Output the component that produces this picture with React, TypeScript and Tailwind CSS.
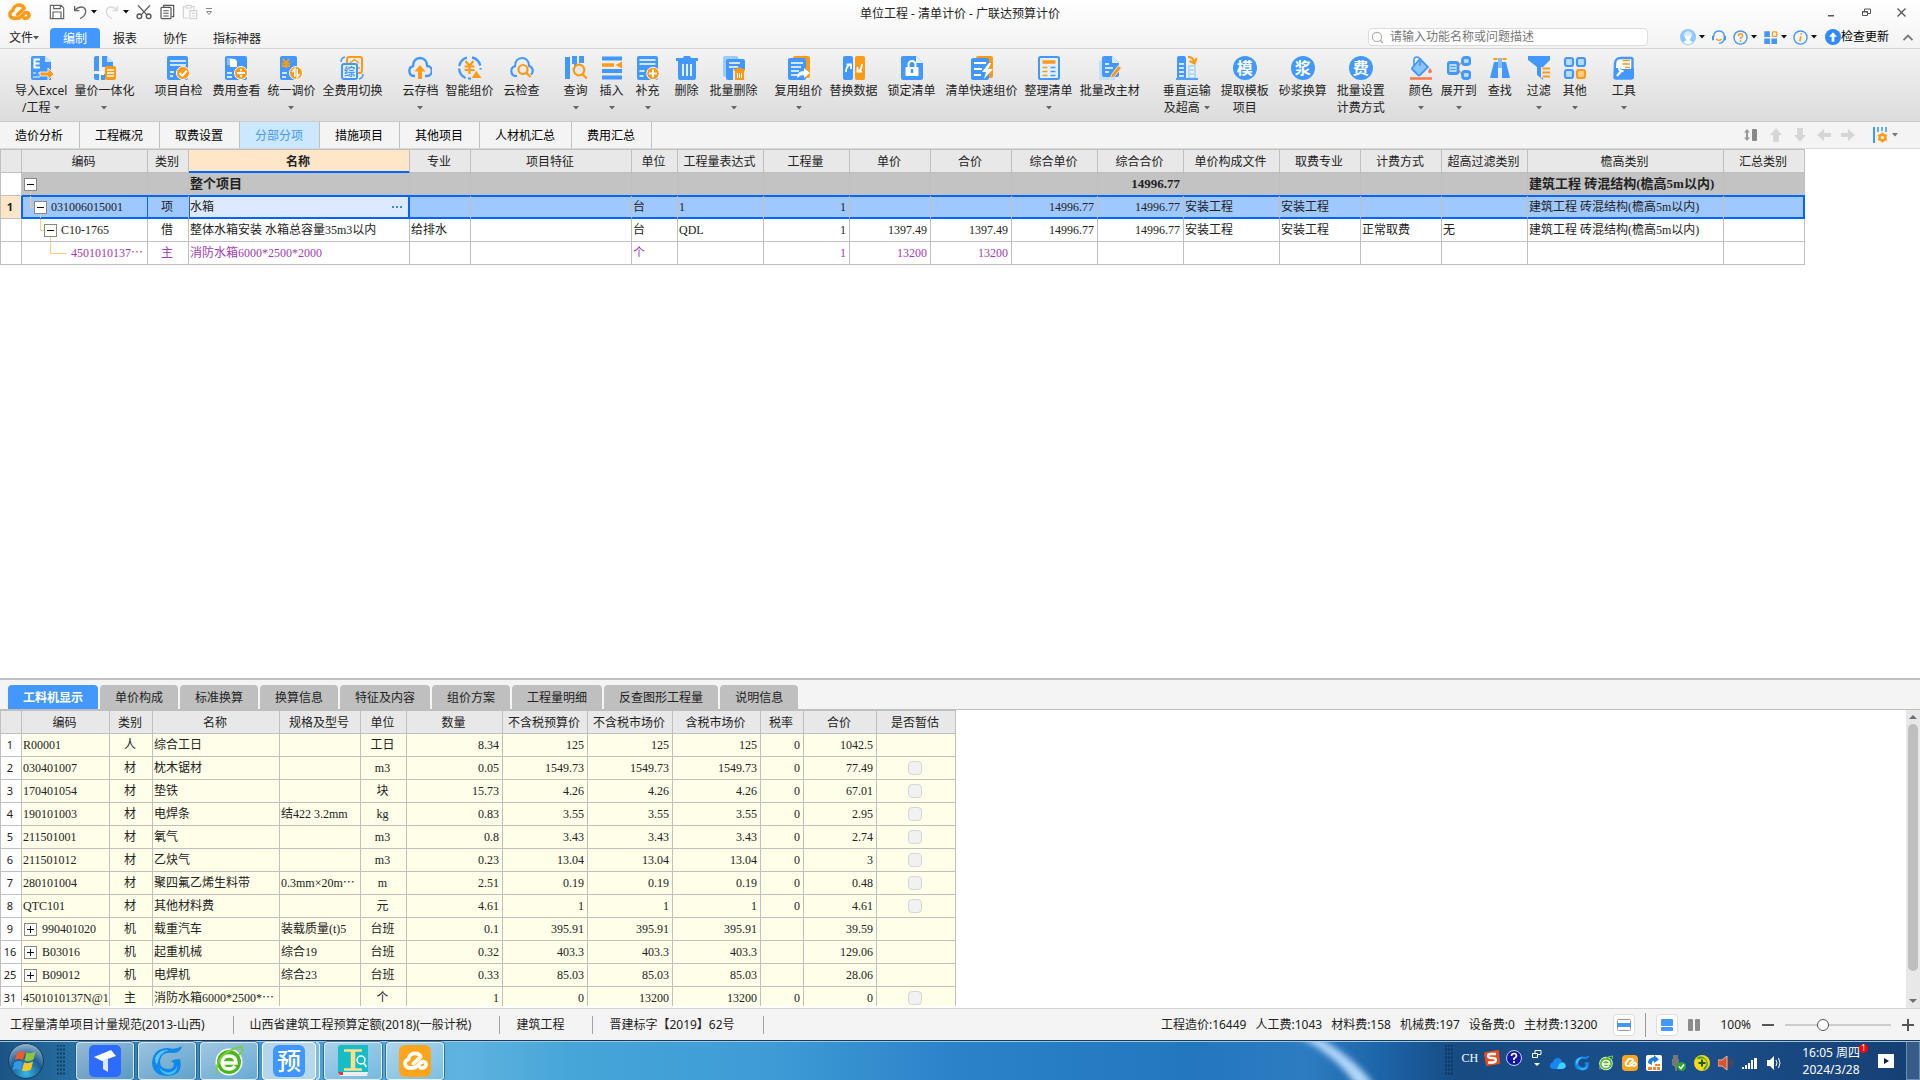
import { useState } from "react";
import type { ReactNode } from "react";

const B = "#4398ff";
const O = "#ff9a17";

function Svg({ size = 24, children }: { size?: number; children: ReactNode }) {
  return (
    <svg width={size} height={size} viewBox="0 0 24 24" fill="none" aria-hidden="true" className="shrink-0">
      {children}
    </svg>
  );
}

function Arrow({ color = "#444" }: { color?: string }) {
  return (
    <svg width="6" height="4" viewBox="0 0 6 4" aria-hidden="true" className="shrink-0">
      <path d="M0 0h6L3 3.6z" fill={color} />
    </svg>
  );
}

function CloudLogo({ color = O, size = 24 }: { color?: string; size?: number }) {
  return (
    <svg width={size} height={size} viewBox="0 0 24 24" fill="none" stroke={color} strokeWidth="3.4" strokeLinecap="round" strokeLinejoin="round" aria-hidden="true" className="shrink-0">
      <path d="M10 18.3H6.5a3.9 3.9 0 0 1-.6-7.7C6.200 7 9 5 12 5c2.300 0 4.300 1.200 5.300 3.200L10.500 14.500" />
      <path d="M10.500 18.300c2 0 2.800-.8 4-2l3-3c1.200-1.200 3.200-1 4 .2 1.400 2 0 4.800-2.500 4.800h-2" />
    </svg>
  );
}

function CharCircle({ char }: { char: string }) {
  return (
    <span className="flex size-6 items-center justify-center rounded-full bg-[#4398ff] text-base leading-6 font-bold text-white" aria-hidden="true">
      {char}
    </span>
  );
}

const icons: Record<string, ReactNode> = {
  import: (
    <Svg>
      <path d="M2 2q0-2 2-2h12l6 6v18H4q-2 0-2-2z" fill={B} />
      <path d="M16 0l6 6h-6z" fill="#cce4ff" />
      <path d="M11 3.500H5.500v8H11M5.500 7.500h5" stroke="#fff" strokeWidth="2" />
      <path d="M4 17h3M9 17h2M4 21h7" stroke="#b9dbff" strokeWidth="1.500" />
      <path d="M11 16h8v-4l6 6-6 6v-4h-8z" fill={O} stroke="#e8e8e8" strokeWidth="1" />
    </Svg>
  ),
  merge: (
    <Svg>
      <path d="M2 2q0-2 2-2h3v15H2zM10 0h5l6 6v5H10zM2 18h5v6H4q-2 0-2-2zM9 18h4v6H9z" fill={B} />
      <path d="M15 0l6 6h-6z" fill="#cce4ff" />
      <path d="M7 15h5v4H7z" fill="#fff" />
      <rect x="13" y="10" width="11" height="14" rx="2" fill={O} />
      <path d="M15 14h7M15 17h7M15 20h7" stroke="#fff" strokeWidth="1.300" />
    </Svg>
  ),
  check: (
    <Svg>
      <rect x="1" y="0" width="21" height="24" rx="2" fill={B} />
      <path d="M4 5h16M4 9h16M4 16h4M4 20h3" stroke="#fff" strokeWidth="1.700" />
      <circle cx="17" cy="17" r="6.500" fill={O} stroke="#fff" />
      <path d="M13.500 17l2.800 2.700 4.500-5" stroke="#fff" strokeWidth="2" />
    </Svg>
  ),
  view: (
    <Svg>
      <rect x="1" y="0" width="22" height="24" rx="2" fill={B} />
      <path d="M3 2h6v7H3z" fill="#8dc2ff" />
      <path d="M6 3h5l2 2v6H6z" fill="#fff" />
      <path d="M3 17h5M3 21h5" stroke="#fff" strokeWidth="1.500" />
      <circle cx="17" cy="17" r="6.500" fill={O} stroke="#fff" />
      <path d="M13 17h8M17 12.800v2.400M17 18.800v2.400" stroke="#fff" strokeWidth="1.800" />
    </Svg>
  ),
  adjust: (
    <Svg>
      <rect x="1" y="0" width="17" height="24" rx="2" fill={B} />
      <path d="M4 3l3 4 3-4M3 7.500h8M3 10h8M7 7v5" stroke={O} strokeWidth="1.800" />
      <path d="M3 17h5M3 21h4" stroke="#fff" strokeWidth="1.500" />
      <circle cx="17" cy="17" r="6.500" fill={O} stroke="#fff" />
      <path d="M15.800 21v-8l-2.500 3M18.200 13v8l2.500-3" stroke="#fff" strokeWidth="1.600" />
    </Svg>
  ),
  swap: (
    <Svg>
      <rect x="7" y="1" width="15" height="16" rx="2" stroke={O} strokeWidth="2" />
      <path d="M10 7l4.500-3.500L19 7M12 8.500h6M18 12h2" stroke={O} strokeWidth="1.500" />
      <rect x="2" y="8" width="15" height="15" rx="2" fill="#e3f0ff" stroke={B} strokeWidth="2" />
      <text x="9.500" y="19.800" textAnchor="middle" fontSize="11" fontWeight="700" fill={B}>综</text>
      <path d="M1 6q0-4 4-5M23 18q0 4-4 5" stroke={B} strokeWidth="1.500" />
    </Svg>
  ),
  cloudUp: (
    <Svg>
      <path d="M7 20H6a5 5 0 0 1-1-9.800C5 5 8 2 12 2s7 3 7.200 8A5 5 0 0 1 18.500 20H17" stroke={B} strokeWidth="2.400" />
      <path d="M12 9l5.500 6.500H14V23h-4v-7.500H6.500z" fill={O} />
    </Svg>
  ),
  smart: (
    <Svg>
      <path d="M9 1.600A10.800 10.800 0 0 0 9 22.400M14 1.500a10.800 10.800 0 0 1 8.500 12" stroke={B} strokeWidth="2.300" strokeDasharray="12 2.500" />
      <path d="M7.500 5l4 5 4-5M6.500 10.500h10M6.500 14h10M11.500 10v8" stroke={O} strokeWidth="2.200" />
      <path d="M18.500 15l5 7h-10z" fill={O} />
      <path d="M10 22.500h3" stroke={B} strokeWidth="2" />
    </Svg>
  ),
  cloudSearch: (
    <Svg>
      <path d="M7 20H6a5 5 0 0 1-1-9.800C5 5 8 2 12 2s7 3 7.200 8A5 5 0 0 1 21 18.500" stroke={B} strokeWidth="2.200" />
      <circle cx="13" cy="13.500" r="4.500" stroke={O} strokeWidth="2.200" />
      <path d="M16.500 17l4 4" stroke={O} strokeWidth="2.400" />
    </Svg>
  ),
  query: (
    <Svg>
      <path d="M1 1h5v22H1zM8 0h5v8l-3 3v-3H8zM15 0h5v7h-5z" fill={B} />
      <circle cx="15" cy="14" r="5.300" fill="#e8e8e8" stroke={O} strokeWidth="2.200" />
      <path d="M18.800 18.500l4 4" stroke={O} strokeWidth="2.400" />
    </Svg>
  ),
  insert: (
    <Svg>
      <path d="M2 2.500h20M2 15h20M2 21.500h20" stroke={B} strokeWidth="4" />
      <path d="M2 9h12" stroke={O} strokeWidth="3.500" />
      <path d="M22 5.500v7L15.500 9z" fill={O} />
    </Svg>
  ),
  supplement: (
    <Svg>
      <rect x="1" y="0" width="21" height="24" rx="2" fill={B} />
      <path d="M3.500 4h16M3.500 8h16M3.500 15h5M3.500 20h4" stroke="#fff" strokeWidth="1.700" />
      <circle cx="17" cy="17.500" r="6.300" fill={O} stroke="#fff" />
      <path d="M13 17.500h8M17 13.500v8" stroke="#fff" strokeWidth="2" />
    </Svg>
  ),
  remove: (
    <Svg>
      <path d="M1 2h7l1-2h6l1 2h7v3h-2v17q0 2-2 2H5q-2 0-2-2V5H1z" fill={B} />
      <path d="M8 8v12M12 8v12M16 8v12" stroke="#fff" strokeWidth="1.700" />
    </Svg>
  ),
  batchRemove: (
    <Svg>
      <path d="M1 2q0-2 2-2h12l2 3v18H3q-2 0-2-2z" fill="#9accff" />
      <rect x="4" y="3" width="19" height="21" rx="2" fill={B} />
      <path d="M7 7h11M7 11h9" stroke="#fff" strokeWidth="1.600" />
      <path d="M11 13h12v11H11z" fill="#e8e8e8" />
      <path d="M12 13h3l1-1.500h3l1 1.500h3v2h-1v9h-9v-9h-1z" fill={O} />
      <path d="M15.500 17v5M17.500 17v5M19.500 17v5" stroke="#fff" />
    </Svg>
  ),
  reuse: (
    <Svg>
      <rect x="6" y="0" width="17" height="22" rx="2" fill={O} />
      <rect x="1" y="2" width="18" height="22" rx="2" fill={B} />
      <path d="M4 7h12M4 11h10M4 15h8M4 19h7" stroke="#fff" strokeWidth="1.700" />
      <path d="M10 22q0-7 7-7v-3l6 5-6 5v-3q-4 0-7 3z" fill="#fff" />
    </Svg>
  ),
  replace: (
    <Svg>
      <rect x="1" y="0" width="10" height="24" rx="2" fill={B} />
      <rect x="13" y="0" width="10" height="24" rx="2" fill={O} />
      <path d="M4 16q0-6 4-7M4.500 8.500H9V13" stroke="#fff" strokeWidth="1.800" />
      <path d="M20 8q0 6-4 7M15.500 11v4.500H20" stroke="#fff" strokeWidth="1.800" />
    </Svg>
  ),
  lock: (
    <Svg>
      <path d="M1 2q0-2 2-2h13l7 7v15q0 2-2 2H3q-2 0-2-2z" fill={B} />
      <path d="M16 0l7 7h-7z" fill="#e6f2ff" />
      <path d="M8.500 11V8.500a3.500 3.500 0 0 1 7 0V11" stroke="#fff" strokeWidth="2" />
      <rect x="5.500" y="11" width="13" height="9" rx="1" fill="#fff" />
      <path d="M12 13v4" stroke={B} strokeWidth="2.400" />
    </Svg>
  ),
  quick: (
    <Svg>
      <rect x="6" y="0" width="17" height="22" rx="2" fill={O} />
      <rect x="1" y="2" width="18" height="22" rx="2" fill={B} />
      <path d="M4 7h12M4 13h8M4 19h7" stroke="#fff" strokeWidth="1.800" />
      <path d="M19 7l-7 9h4l-2 7 9-10h-5l3-6z" fill="#fff" />
    </Svg>
  ),
  arrange: (
    <Svg>
      <rect x="2" y="1" width="20" height="22" rx="1.500" fill="#e3f0ff" stroke={B} strokeWidth="2" />
      <path d="M5.500 6h13" stroke={O} strokeWidth="3.500" />
      <path d="M5.500 11.500h5M5.500 15.500h5M5.500 19.500h5" stroke={O} strokeWidth="1.700" />
      <path d="M13.500 11.500h5M13.500 15.500h5M13.500 19.500h5" stroke={B} strokeWidth="1.700" />
    </Svg>
  ),
  edit: (
    <Svg>
      <path d="M1 6q0-2 2-2h2v17h12v3H3q-2 0-2-2z" fill="#c3e0ff" />
      <path d="M4 2q0-2 2-2h8l7 7v12q0 2-2 2H6q-2 0-2-2z" fill={B} />
      <path d="M14 0l7 7h-7z" fill="#d8eaff" />
      <path d="M7 8h4M7 12h8M7 16h4" stroke="#fff" strokeWidth="1.600" />
      <path d="M12.500 22.500l1-4 7-9 3 2.200-7 9z" fill={O} stroke="#e8e8e8" />
    </Svg>
  ),
  vertical: (
    <Svg>
      <path d="M2 2q0-2 2-2h5q2 0 2 2v20H2z" fill={B} />
      <path d="M4 8h5M4 12h5M4 16h5M4 20h5" stroke="#fff" strokeWidth="1.300" />
      <path d="M13 9h8v13h-8z" fill="#b4d8ff" />
      <path d="M15 12h4M15 16h4M15 20h4" stroke="#fff" strokeWidth="1.300" />
      <path d="M1 23h22" stroke={B} strokeWidth="1.800" />
      <path d="M13 1q5 0 6 5M14.500 5l5 2.500L21.500 2" stroke={O} strokeWidth="2.200" />
    </Svg>
  ),
  template: <CharCircle char="模" />,
  mortar: <CharCircle char="浆" />,
  fee: <CharCircle char="费" />,
  color: (
    <Svg>
      <path d="M11 3l8 8-8 8q-1 .8-2 0l-5.500-5.500q-1-1 0-2z" fill="#8ac5ff" stroke={B} strokeWidth="1.800" />
      <path d="M5 10V4q0-3 3-3 2.500 0 3 3v6" stroke={B} strokeWidth="1.600" />
      <path d="M21 12q4 5 0 5t0-5z" fill="#ff7b4f" />
      <path d="M1 22.500h22" stroke="#ff7b4f" strokeWidth="2.600" />
    </Svg>
  ),
  expand: (
    <Svg>
      <path d="M10 11l6-6M10 13l6 6" stroke={O} strokeWidth="1.700" />
      <rect x="1" y="6.500" width="10" height="11" rx="2" fill="#b9dbff" stroke={B} strokeWidth="2.800" />
      <path d="M3.500 10.500h5M3.500 13.500h5" stroke={B} />
      <rect x="15.500" y="1.500" width="7.500" height="7" rx="2.500" fill="#b9dbff" stroke={B} strokeWidth="2.800" />
      <rect x="15.500" y="15.500" width="7.500" height="7" rx="2.500" fill="#b9dbff" stroke={B} strokeWidth="2.800" />
    </Svg>
  ),
  find: (
    <Svg>
      <path d="M6 6h4v16H2zM14 6h4l4 16h-8z" fill={B} />
      <path d="M11 2v10M13 2v10" stroke={B} strokeWidth="1.200" />
      <path d="M5.500 3h4M14.500 3h4" stroke={O} strokeWidth="2.200" />
    </Svg>
  ),
  filter: (
    <Svg>
      <path d="M1 0h22v4l-7 7v13l-6-5v-8L1 4z" fill={B} />
      <path d="M14 11h10v11H14z" fill="#e8e8e8" />
      <path d="M15.500 12.500H23M15.500 16.500H23M15.500 20.500H23" stroke={O} strokeWidth="2" />
    </Svg>
  ),
  other: (
    <Svg>
      <rect x="2" y="2" width="8" height="8" rx="2" fill="#b9dbff" stroke={B} strokeWidth="2.200" />
      <rect x="14" y="2" width="8" height="8" rx="2" fill="#b9dbff" stroke={B} strokeWidth="2.200" />
      <rect x="2" y="14" width="8" height="8" rx="2" fill="#b9dbff" stroke={B} strokeWidth="2.200" />
      <rect x="14" y="14" width="8" height="8" rx="2" fill="#ffd08a" stroke={O} strokeWidth="2.200" />
    </Svg>
  ),
  tools: (
    <Svg>
      <path d="M3 8q0-6 6-6h10q1.500 0 1.500 1.500V21q0 1.500-1.500 1.500H4q-1.500 0-1.500-1.500z" fill="#fff" stroke={B} strokeWidth="2.400" />
      <path d="M2 12h20v9q0 2-2 2H4q-2 0-2-2z" fill={B} />
      <path d="M9 5h10v8H9z" fill="#fff" />
      <path d="M10.500 4.500H18M10.500 8H18M13 11.500h5" stroke={O} strokeWidth="1.700" />
      <path d="M5 20l4.500-5.500M7 11.500q0 4 4.500 3.500" stroke="#fff" strokeWidth="2.200" />
    </Svg>
  ),
};

type Tool = { icon: string; label: string; second?: string; drop?: boolean };

const ribbon: Tool[][] = [
  [
    { icon: "import", label: "导入Excel", second: "/工程", drop: true },
    { icon: "merge", label: "量价一体化", drop: true },
  ],
  [
    { icon: "check", label: "项目自检" },
    { icon: "view", label: "费用查看" },
    { icon: "adjust", label: "统一调价", drop: true },
    { icon: "swap", label: "全费用切换" },
  ],
  [
    { icon: "cloudUp", label: "云存档", drop: true },
    { icon: "smart", label: "智能组价" },
    { icon: "cloudSearch", label: "云检查" },
  ],
  [
    { icon: "query", label: "查询", drop: true },
    { icon: "insert", label: "插入", drop: true },
    { icon: "supplement", label: "补充", drop: true },
    { icon: "remove", label: "删除" },
    { icon: "batchRemove", label: "批量删除", drop: true },
  ],
  [
    { icon: "reuse", label: "复用组价", drop: true },
    { icon: "replace", label: "替换数据" },
    { icon: "lock", label: "锁定清单" },
    { icon: "quick", label: "清单快速组价" },
    { icon: "arrange", label: "整理清单", drop: true },
    { icon: "edit", label: "批量改主材" },
  ],
  [
    { icon: "vertical", label: "垂直运输", second: "及超高", drop: true },
    { icon: "template", label: "提取模板", second: "项目" },
    { icon: "mortar", label: "砂浆换算" },
    { icon: "fee", label: "批量设置", second: "计费方式" },
  ],
  [
    { icon: "color", label: "颜色", drop: true },
    { icon: "expand", label: "展开到", drop: true },
    { icon: "find", label: "查找" },
    { icon: "filter", label: "过滤", drop: true },
    { icon: "other", label: "其他", drop: true },
  ],
  [{ icon: "tools", label: "工具", drop: true }],
];

function RibbonButton({ tool }: { tool: Tool }) {
  const narrow = tool.drop && !tool.second;
  return (
    <button className={"flex flex-col items-center whitespace-nowrap leading-[17px] " + (narrow ? "min-w-9 px-0.5" : "min-w-[42px] px-[5px]")}>
      {icons[tool.icon]}
      <span className="mt-0.5">{tool.label}</span>
      {(tool.second || tool.drop) && (
        <span className="flex h-[17px] items-center gap-1">
          {tool.second}
          {tool.drop && <Arrow color="#666" />}
        </span>
      )}
    </button>
  );
}

function QuickAccess() {
  return (
    <div className="flex items-center gap-[7px]">
      <button aria-label="保存">
        <Svg size={16}>
          <path d="M2 2h16l4 4v16H2zM7 2v5h10V2M6 22V12h12v10" stroke="#666" strokeWidth="1.800" />
        </Svg>
      </button>
      <button aria-label="撤销" className="flex items-center gap-[3px]">
        <Svg size={16}>
          <path d="M4 3v7h7M4 10Q10 3 17 5q5 3 3 9-1 4-8 8" stroke="#666" strokeWidth="2" />
        </Svg>
        <Arrow color="#111" />
      </button>
      <button aria-label="恢复" className="flex items-center gap-[3px]">
        <Svg size={16}>
          <path d="M20 3v7h-7M20 10Q14 3 7 5q-5 3-3 9 1 4 8 8" stroke="#d8d8d8" strokeWidth="2" />
        </Svg>
        <Arrow color="#111" />
      </button>
      <button aria-label="剪切">
        <Svg size={16}>
          <path d="M3 2l13 14M21 2L8 16" stroke="#555" strokeWidth="2" />
          <circle cx="5" cy="18.500" r="3.500" stroke="#555" strokeWidth="2" />
          <circle cx="19" cy="18.500" r="3.500" stroke="#555" strokeWidth="2" />
        </Svg>
      </button>
      <button aria-label="复制">
        <Svg size={16}>
          <path d="M7 5V2h15v17h-3" stroke="#555" strokeWidth="1.800" />
          <rect x="3" y="5" width="15" height="17" rx="1.500" stroke="#555" strokeWidth="1.800" />
          <path d="M6.500 10h8M6.500 14h8M6.500 18h8" stroke="#555" strokeWidth="1.600" />
        </Svg>
      </button>
      <button aria-label="粘贴">
        <Svg size={16}>
          <path d="M10 21H2V4h4M14 4h4v5M6 2h8v4H6z" stroke="#d4d4d4" strokeWidth="1.800" />
          <path d="M12 10h10v12H12zM15 14h4M15 18h4" stroke="#d4d4d4" strokeWidth="1.800" />
        </Svg>
      </button>
      <button aria-label="自定义快速访问">
        <svg width="8" height="8" viewBox="0 0 8 8" fill="none" stroke="#888" aria-hidden="true">
          <path d="M1 .5h6M1.500 3.500h5L4 6.500z" />
        </svg>
      </button>
    </div>
  );
}

function Header() {
  return (
    <header className="border-b border-[#d4d4d4] bg-gradient-to-b from-white to-[#f3f3f3]">
      <div className="grid h-6 grid-cols-[1fr_auto_1fr] items-center">
        <div className="flex items-center gap-[18px] pl-[7px]">
          <CloudLogo />
          <QuickAccess />
        </div>
        <h1 className="pt-1 text-xs">单位工程 - 清单计价 - 广联达预算计价</h1>
        <div className="flex items-center justify-end gap-[26px] pr-3.5">
          <button aria-label="最小化">
            <svg width="9" height="9" viewBox="0 0 9 9" aria-hidden="true"><path d="M1 7h6v1.500H1z" fill="#555" /></svg>
          </button>
          <button aria-label="还原">
            <svg width="9" height="9" viewBox="0 0 9 9" fill="none" stroke="#555" aria-hidden="true"><path d="M.5 3.500h5v4h-5zM2.500 3V1h6v4.500H6M.5 4h5" /></svg>
          </button>
          <button aria-label="关闭">
            <svg width="9" height="9" viewBox="0 0 9 9" stroke="#555" strokeWidth="1.300" aria-hidden="true"><path d="M.5.5l8 8M8.500.5l-8 8" /></svg>
          </button>
        </div>
      </div>
      <div className="flex h-6 items-end">
        <nav className="flex *:h-5 *:leading-[22px]">
          <button className="flex w-[50px] items-center pl-[9px]">
            文件
            <Arrow color="#555" />
          </button>
          <button className="rounded-t-sm bg-[#4398ff] px-[13px] text-white">编制</button>
          <button className="px-[13px]">报表</button>
          <button className="px-[13px]">协作</button>
          <button className="px-[13px]">指标神器</button>
        </nav>
        <div className="mb-0.5 ml-auto flex items-center pr-[7px]">
          <label className="mr-8 flex h-[18px] w-[280px] items-center gap-1.5 rounded-sm border border-[#ddd] bg-white pl-0.5">
            <Svg size={13}>
              <circle cx="11" cy="11" r="8.500" stroke="#aaa" strokeWidth="2" />
              <path d="M17 17l5 5" stroke="#aaa" strokeWidth="2.500" />
            </Svg>
            <input aria-label="搜索" className="w-full bg-transparent leading-4 outline-none placeholder:text-[#777]" placeholder="请输入功能名称或问题描述" />
          </label>
          <div className="flex items-center gap-1.5">
            <button aria-label="账户" className="flex items-center gap-[3px]">
              <Svg size={16}>
                <circle cx="12" cy="12" r="12" fill="#8fc6ff" />
                <path d="M7 11q0-6 5-6t5 6q0 3-2.500 5 .5 2 5 3.500-7 7-15 0 4.500-1.500 5-3.500Q7 14 7 11z" fill="#fff" />
                <path d="M5 10q2-7 7-7t7 7z" fill="#d5e9ff" />
              </Svg>
              <Arrow color="#111" />
            </button>
            <button aria-label="客服">
              <Svg size={16}>
                <path d="M4 12q0-9 8-9t8 9q0 9-8 9.500" stroke={B} strokeWidth="2" />
                <path d="M1.500 10h3v7h-3zM19.500 10h3v7h-3z" fill={B} />
                <path d="M8 15q4 4 8 0" stroke={O} strokeWidth="2" />
              </Svg>
            </button>
            <button aria-label="帮助" className="flex items-center gap-[3px]">
              <Svg size={15}>
                <circle cx="12" cy="12" r="10.500" stroke={B} strokeWidth="2.200" />
                <path d="M8.500 9.500q0-3.500 3.500-3.500t3.500 3q0 2-3.500 4v1.500M12 16.500V19" stroke={O} strokeWidth="2.200" />
              </Svg>
              <Arrow color="#111" />
            </button>
            <button aria-label="应用" className="flex items-center gap-[3px]">
              <Svg size={15}>
                <path d="M2 2h9v9H2zM2 13.500h9v9H2zM13.500 13.500h9v9h-9z" fill={B} />
                <rect x="15" y="3" width="7" height="7" rx="1" stroke={O} strokeWidth="2" />
              </Svg>
              <Arrow color="#111" />
            </button>
            <button aria-label="关于" className="flex items-center gap-[3px]">
              <Svg size={15}>
                <circle cx="12" cy="12" r="10.500" stroke={B} strokeWidth="2.200" />
                <path d="M13.500 5l-.6 2.500M12.500 10l-1.500 8" stroke={O} strokeWidth="2.600" />
              </Svg>
              <Arrow color="#111" />
            </button>
          </div>
          <button className="ml-2 flex items-center whitespace-nowrap leading-4 text-black">
            <Svg size={16}>
              <circle cx="12" cy="12" r="12" fill="#2f8aff" />
              <path d="M12 5l6 6.500h-4V19h-4v-7.500H6z" fill="#fff" />
            </Svg>
            检查更新
          </button>
          <button aria-label="收起功能区" className="ml-3.5">
            <svg width="10" height="7" viewBox="0 0 10 7" fill="none" stroke="#777" strokeWidth="1.800" aria-hidden="true"><path d="M.5 6L5 1.500 9.500 6" /></svg>
          </button>
        </div>
      </div>
    </header>
  );
}

const pageTabs = ["造价分析", "工程概况", "取费设置", "分部分项", "措施项目", "其他项目", "人材机汇总", "费用汇总"];

function PageTabs() {
  const [active, setActive] = useState("分部分项");
  return (
    <div className="flex h-[27px] border-b border-[#d8d8d8] bg-[#f4f4f4]">
      {pageTabs.map((t) => (
        <button
          key={t}
          onClick={() => setActive(t)}
          className={"border-r border-[#c0c0c0] pt-0.5 pr-4 pl-[15px] " + (t === active ? "bg-[#cce8ff] text-[#4398ff]" : "text-black")}
        >
          {t}
        </button>
      ))}
      <div className="ml-auto flex items-center gap-2 pr-[22px]">
        <button aria-label="行高">
          <svg width="16" height="16" viewBox="0 0 16 16" aria-hidden="true">
            <path d="M3 2l3 3.500H4v5h2L3 14l-3-3.500h2v-5H0z" fill="#999" />
            <rect x="8" y="2" width="5" height="12" rx="1" fill="#888" />
          </svg>
        </button>
        {["上移", "下移", "左移", "右移"].map((name, i) => (
          <button key={name} aria-label={name}>
            <svg width="16" height="16" viewBox="0 0 16 16" aria-hidden="true">
              <path
                d={[
                  "M8 1l6 7h-3v7H5V8H2z",
                  "M8 15l6-7h-3V1H5v7H2z",
                  "M1 8l7-6v4h7v4H8v4z",
                  "M15 8L8 2v4H1v4h7v4z",
                ][i]}
                fill="#d6d6d6"
              />
            </svg>
          </button>
        ))}
        <button aria-label="列设置" className="ml-2 flex items-center gap-1">
          <svg width="16" height="16" viewBox="0 0 16 16" fill="none" aria-hidden="true">
            <path d="M2 0v16" stroke={B} strokeWidth="2" />
            <path d="M6 0v5M10 0v4M14 0v5" stroke={B} strokeWidth="1.600" />
            <circle cx="10.500" cy="10.500" r="3" stroke={O} strokeWidth="2.400" />
            <path d="M10.500 5.500v10M6 8l9 5M6 13l9-5" stroke={O} strokeWidth="1.500" />
            <circle cx="10.500" cy="10.500" r="1.600" fill="#fff" />
          </svg>
          <Arrow color="#777" />
        </button>
      </div>
    </div>
  );
}

type Col = { title: string; w: string; align?: string };

// shared by both grids
const cell = "h-[23px] overflow-hidden whitespace-nowrap border-r border-b border-[#bfbfbf] pl-px pr-[3px]";
const grid = "w-px table-fixed border-separate border-spacing-0 border-t border-l border-[#bfbfbf] font-['Liberation_Serif','Noto_Sans_CJK_SC',serif] text-xs leading-5 text-[#222]";
const rowNo = "bg-white text-center text-[11px] font-['Noto_Sans','Noto_Sans_CJK_SC',sans-serif]";

const listCols: Col[] = [
  { title: "", w: "w-[21px]" },
  { title: "编码", w: "w-[126px]" },
  { title: "类别", w: "w-[41px]", align: "text-center" },
  { title: "名称", w: "w-[221px]" },
  { title: "专业", w: "w-[61px]" },
  { title: "项目特征", w: "w-[161px]" },
  { title: "单位", w: "w-[46px]" },
  { title: "工程量表达式", w: "w-[86px]" },
  { title: "工程量", w: "w-[86px]", align: "text-right" },
  { title: "单价", w: "w-[81px]", align: "text-right" },
  { title: "合价", w: "w-[81px]", align: "text-right" },
  { title: "综合单价", w: "w-[86px]", align: "text-right" },
  { title: "综合合价", w: "w-[86px]", align: "text-right" },
  { title: "单价构成文件", w: "w-[96px]" },
  { title: "取费专业", w: "w-[81px]" },
  { title: "计费方式", w: "w-[81px]" },
  { title: "超高过滤类别", w: "w-[86px]" },
  { title: "檐高类别", w: "w-[196px]" },
  { title: "汇总类别", w: "w-[81px]" },
];

const eaves = "建筑工程 砖混结构(檐高5m以内)";

const listRows = [
  ["", "", "", "整个项目", "", "", "", "", "", "", "", "", "14996.77", "", "", "", "", eaves, ""],
  ["1", "031006015001", "项", "水箱", "", "", "台", "1", "1", "", "", "14996.77", "14996.77", "安装工程", "安装工程", "", "", eaves, ""],
  ["", "C10-1765", "借", "整体水箱安装 水箱总容量35m3以内", "给排水", "", "台", "QDL", "1", "1397.49", "1397.49", "14996.77", "14996.77", "安装工程", "安装工程", "正常取费", "无", eaves, ""],
  ["", "4501010137⋯", "主", "消防水箱6000*2500*2000", "", "", "个", "", "1", "13200", "13200", "", "", "", "", "", "", "", ""],
];

function TreeCell({ depth, leaf, text }: { depth: number; leaf?: boolean; text: string }) {
  const x = 10 * depth + 1;
  return (
    <div className="flex items-center gap-1">
      <svg width={x + 13} height="22" fill="none" aria-hidden="true" className="shrink-0">
        {depth > 0 && <path d={`M${x - 3.5} 0V11.5H${leaf ? x + 13 : x}`} stroke="#ffcc7a" />}
        {!leaf && (
          <>
            <path d={`M${x + 6.5} 17V22`} stroke="#ffcc7a" />
            <rect x={x + 0.5} y="5.5" width="12" height="12" fill="#fff" stroke="#888" />
            <path d={`M${x + 3} 11.5h7`} stroke="#111" />
          </>
        )}
      </svg>
      {text}
    </div>
  );
}

const rowTone = ["bg-[#c3c3c3] text-[13px] font-bold", "bg-[#9fc8ff]", "bg-white", "bg-white text-[#a03cb4]"];

function selectedCell(i: number) {
  if (i === 0) return "border-r-[#0066ff]";
  if (i === 1) return "border-r-[#0066ff] border-b-[#0066ff] shadow-[0_-1px_0_#0066ff,inset_1px_0_0_#0066ff,inset_0_1px_0_#0066ff,inset_0_-1px_0_#0066ff]";
  if (i === 3) return "border-r-[#0066ff] border-b-[#0066ff] bg-[#dde9ff] shadow-[0_-1px_0_#0066ff,inset_0_0_0_1px_#0066ff]";
  if (i === 18) return "border-r-[#0066ff] border-b-[#0066ff] shadow-[0_-1px_0_#0066ff,inset_-1px_0_0_#0066ff,inset_0_1px_0_#0066ff,inset_0_-1px_0_#0066ff]";
  return "border-b-[#0066ff] shadow-[0_-1px_0_#0066ff,inset_0_1px_0_#0066ff,inset_0_-1px_0_#0066ff]";
}

function ListGrid() {
  return (
    <table className={grid}>
      <colgroup>
        {listCols.map((c, i) => (
          <col key={i} className={c.w} />
        ))}
      </colgroup>
      <thead>
        <tr>
          {listCols.map((c, i) => (
            <th
              key={i}
              className={
                cell +
                " h-6 pt-0.5 text-center " +
                (c.title === "名称" ? "border-b-[#0066ff] bg-[#ffe6c8] font-bold shadow-[inset_0_-1px_0_#0066ff]" : "bg-[#e8e8e8] font-normal")
              }
            >
              {c.title}
            </th>
          ))}
        </tr>
      </thead>
      <tbody>
        {listRows.map((row, r) => (
          <tr key={r} className={rowTone[r]}>
            {row.map((v, i) => (
              <td
                key={i}
                className={
                  cell + " " + (listCols[i].align ?? "") + " " +
                  (i === 0 ? rowNo : "") + " " +
                  (r === 1 ? selectedCell(i) : "") +
                  (r === 1 && i === 0 ? " !bg-[#ffe6c8] font-bold" : "")
                }
              >
                {i === 1 ? (
                  <TreeCell depth={r} leaf={r === 3} text={v} />
                ) : r === 1 && i === 3 ? (
                  <div className="flex items-center justify-between pr-1">
                    {v}
                    <button aria-label="更多" className="flex gap-0.5">
                      <i className="size-0.5 bg-[#3a8ccf]" />
                      <i className="size-0.5 bg-[#3a8ccf]" />
                      <i className="size-0.5 bg-[#3a8ccf]" />
                    </button>
                  </div>
                ) : (
                  v
                )}
              </td>
            ))}
          </tr>
        ))}
      </tbody>
    </table>
  );
}

const detailTabs = ["工料机显示", "单价构成", "标准换算", "换算信息", "特征及内容", "组价方案", "工程量明细", "反查图形工程量", "说明信息"];

const detailCols: Col[] = [
  { title: "", w: "w-[21px]" },
  { title: "编码", w: "w-[88px]" },
  { title: "类别", w: "w-[43px]", align: "text-center" },
  { title: "名称", w: "w-[127px]" },
  { title: "规格及型号", w: "w-[81px]" },
  { title: "单位", w: "w-[46px]", align: "text-center" },
  { title: "数量", w: "w-[96px]", align: "text-right" },
  { title: "不含税预算价", w: "w-[85px]", align: "text-right" },
  { title: "不含税市场价", w: "w-[85px]", align: "text-right" },
  { title: "含税市场价", w: "w-[88px]", align: "text-right" },
  { title: "税率", w: "w-[43px]", align: "text-right" },
  { title: "合价", w: "w-[73px]", align: "text-right" },
  { title: "是否暂估", w: "w-[79px]", align: "text-center" },
];

// last value: whether the row offers the provisional tick box
const detailRows = [
  ["1", "R00001", "人", "综合工日", "", "工日", "8.34", "125", "125", "125", "0", "1042.5", ""],
  ["2", "030401007", "材", "枕木锯材", "", "m3", "0.05", "1549.73", "1549.73", "1549.73", "0", "77.49", "y"],
  ["3", "170401054", "材", "垫铁", "", "块", "15.73", "4.26", "4.26", "4.26", "0", "67.01", "y"],
  ["4", "190101003", "材", "电焊条", "结422 3.2mm", "kg", "0.83", "3.55", "3.55", "3.55", "0", "2.95", "y"],
  ["5", "211501001", "材", "氧气", "", "m3", "0.8", "3.43", "3.43", "3.43", "0", "2.74", "y"],
  ["6", "211501012", "材", "乙炔气", "", "m3", "0.23", "13.04", "13.04", "13.04", "0", "3", "y"],
  ["7", "280101004", "材", "聚四氟乙烯生料带", "0.3mm×20m⋯", "m", "2.51", "0.19", "0.19", "0.19", "0", "0.48", "y"],
  ["8", "QTC101", "材", "其他材料费", "", "元", "4.61", "1", "1", "1", "0", "4.61", "y"],
  ["9", "990401020", "机", "载重汽车", "装载质量(t)5", "台班", "0.1", "395.91", "395.91", "395.91", "", "39.59", ""],
  ["16", "B03016", "机", "起重机械", "综合19", "台班", "0.32", "403.3", "403.3", "403.3", "", "129.06", ""],
  ["25", "B09012", "机", "电焊机", "综合23", "台班", "0.33", "85.03", "85.03", "85.03", "", "28.06", ""],
  ["31", "4501010137N@1", "主", "消防水箱6000*2500*⋯", "", "个", "1", "0", "13200", "13200", "0", "0", "y"],
];

function DetailGrid() {
  return (
    <table className={grid}>
      <colgroup>
        {detailCols.map((c, i) => (
          <col key={i} className={c.w} />
        ))}
      </colgroup>
      <thead>
        <tr>
          {detailCols.map((c, i) => (
            <th key={i} className={cell + " bg-[#e8e8e8] pt-0.5 text-center font-normal"}>
              {c.title}
            </th>
          ))}
        </tr>
      </thead>
      <tbody>
        {detailRows.map((row) => (
          <tr key={row[0]} className="bg-[#ffffe9]">
            {row.map((v, i) => (
              <td key={i} className={cell + " " + (detailCols[i].align ?? "") + " " + (i === 0 ? rowNo : "")}>
                {i === 1 && row[2] === "机" ? (
                  <div className="flex items-center gap-[5px] pl-px">
                    <button aria-label="展开" className="size-[13px] border border-[#888] bg-white">
                      <svg width="11" height="11" stroke="#111" aria-hidden="true"><path d="M2 5.500h7M5.500 2v7" /></svg>
                    </button>
                    {v}
                  </div>
                ) : i === 12 ? (
                  v && <input type="checkbox" disabled aria-label={row[3] + "是否暂估"} className="mx-auto block size-3.5 appearance-none rounded-sm border border-[#d6d6d6] bg-[#f1f1f1]" />
                ) : (
                  v
                )}
              </td>
            ))}
          </tr>
        ))}
      </tbody>
    </table>
  );
}

function DetailPanel() {
  const [active, setActive] = useState(detailTabs[0]);
  return (
    <section className="border-t-2 border-[#c0c0c0] bg-[#f4f4f4]">
      <div className="flex gap-0.5 border-b border-[#bfbfbf] pt-[5px] pl-2">
        {detailTabs.map((t) => (
          <button
            key={t}
            onClick={() => setActive(t)}
            className={"h-6 rounded-t-sm px-[15px] pt-0.5 whitespace-nowrap " + (t === active ? "bg-[#4398ff] font-bold text-white" : "bg-[#bfbfbf]")}
          >
            {t}
          </button>
        ))}
      </div>
      <div className="flex h-[298px] bg-white">
        <div className="mb-0.5 flex-1 overflow-hidden">
          <DetailGrid />
        </div>
        <div className="flex w-3.5 flex-col items-center bg-[#e8e8e8] py-[5px]" aria-hidden="true">
          <svg width="8" height="4" viewBox="0 0 8 4"><path d="M0 4h8L4 0z" fill="#6e6e78" /></svg>
          <div className="mt-[5px] mb-7 w-2.5 flex-1 rounded-full bg-[#bebebe]" />
          <svg width="8" height="4" viewBox="0 0 8 4"><path d="M0 0h8L4 4z" fill="#6e6e78" /></svg>
        </div>
      </div>
    </section>
  );
}

const standards = ["工程量清单项目计量规范(2013-山西)", "山西省建筑工程预算定额(2018)(一般计税)", "建筑工程", "晋建标字【2019】62号"];
const totals = ["工程造价:16449", "人工费:1043", "材料费:158", "机械费:197", "设备费:0", "主材费:13200"];

function StatusBar() {
  const [zoom, setZoom] = useState(34);
  return (
    <footer className="flex h-8 items-center border-t border-[#d4d4d4] bg-[#f4f4f4] pr-1.5 pl-2.5 whitespace-nowrap">
      {standards.map((s) => (
        <span key={s} className="mr-4 flex items-center gap-7">
          {s}
          <i className="h-[18px] w-px bg-[#9aa4b4]" />
        </span>
      ))}
      <div className="ml-auto flex gap-[9px]">
        {totals.map((t) => (
          <span key={t}>{t}</span>
        ))}
      </div>
      <button aria-label="汇总条" className="ml-4 flex size-[22px] items-center justify-center rounded-sm border border-[#ddd] bg-white">
        <svg width="14" height="14" fill="none" aria-hidden="true">
          <rect x=".5" y="1.500" width="13" height="11" rx="1" stroke="#999" />
          <path d="M0 5h14v4H0z" fill={B} />
        </svg>
      </button>
      <i className="mx-2.5 h-6 w-px bg-[#999]" />
      <button aria-label="上下布局" className="flex size-[22px] items-center justify-center rounded-sm border border-[#ddd] bg-white">
        <svg width="12" height="12" fill={B} aria-hidden="true">
          <rect width="12" height="7" rx="1" />
          <rect y="8" width="12" height="4" rx="1" />
        </svg>
      </button>
      <button aria-label="左右布局" className="ml-2.5">
        <svg width="12" height="12" fill="#8c8c8c" aria-hidden="true">
          <rect width="5" height="12" rx="1" />
          <rect x="7" width="5" height="12" rx="1" />
        </svg>
      </button>
      <span className="ml-5">100%</span>
      <button aria-label="缩小" className="ml-[11px]">
        <svg width="12" height="12" stroke="#555" strokeWidth="2" aria-hidden="true"><path d="M0 6h12" /></svg>
      </button>
      <input
        type="range"
        aria-label="缩放"
        value={zoom}
        onChange={(e) => setZoom(Number(e.target.value))}
        className="mx-[11px] h-3 w-[106px] appearance-none bg-[linear-gradient(#ccc,#ccc)] bg-[length:100%_2px] bg-center bg-no-repeat [&::-webkit-slider-thumb]:size-3 [&::-webkit-slider-thumb]:appearance-none [&::-webkit-slider-thumb]:rounded-full [&::-webkit-slider-thumb]:border [&::-webkit-slider-thumb]:border-[#555] [&::-webkit-slider-thumb]:bg-white"
      />
      <button aria-label="放大">
        <svg width="12" height="12" stroke="#555" strokeWidth="2" aria-hidden="true"><path d="M0 6h12M6 0v12" /></svg>
      </button>
    </footer>
  );
}

function GLogo({ size }: { size: number }) {
  return (
    <svg width={size} height={size} viewBox="0 0 32 32" aria-hidden="true">
      <path d="M31 1q-1 6-8 7Q10 6 9 16q0 8 8 8 6 0 6-5 0-2-3-3 3-2 9-2 4 16-12 17Q2 31 1 18 2 3 17 3q8 2 14-2z" fill="#1088e8" />
      <path d="M4 13Q8 4 18 5 8 7 6 20q-2-3-2-7z" fill="#5cc4ff" />
      <path d="M8 22q4 6 11 5 6-1 7-7 1 9-8 10-7 0-10-8z" fill="#48b8fa" />
    </svg>
  );
}

function BrowserLogo({ size }: { size: number }) {
  return (
    <svg width={size} height={size} viewBox="0 0 32 32" fill="none" aria-hidden="true">
      <circle cx="16" cy="17" r="13.500" fill="#fff" />
      <circle cx="16" cy="17" r="12" fill="#4cb51c" />
      <path d="M9 18h14q0-7-7-7t-7 7q1 6 7 6 4 0 6-3" stroke="#fff" strokeWidth="3.400" />
      <path d="M4 29Q2 16 13 8 22 2 29 2q2 3-3 8" stroke="#7bd038" strokeWidth="2" />
    </svg>
  );
}

const taskApps = [
  {
    name: "T",
    icon: (
      <svg width="32" height="32" viewBox="0 0 32 32" aria-hidden="true">
        <rect width="32" height="32" rx="5" fill="#2d6bff" />
        <path d="M5 12L22 5l5 6-14 5z" fill="#fff" />
        <path d="M14 15l5-1v13l-5-3z" fill="#dbe6ff" />
      </svg>
    ),
  },
  { name: "G", icon: <GLogo size={32} /> },
  { name: "浏览器", icon: <BrowserLogo size={32} /> },
  {
    name: "预算计价",
    stacked: true,
    icon: <span className="flex size-8 items-center justify-center rounded-md bg-[#3f96ff] text-2xl leading-8 font-medium text-white">预</span>,
  },
  {
    name: "工具",
    icon: (
      <svg width="32" height="32" viewBox="0 0 32 32" fill="none" aria-hidden="true">
        <path d="M1 3q0-3 3-3h27v27H1z" fill="#17bcc4" />
        <path d="M2 27h29l-1 4H3z" fill="#e9eef0" />
        <path d="M1 27h5v3H3z" fill="#d33" />
        <path d="M7 5.500h18M7 24.500h18" stroke="#ffe08a" strokeWidth="2.500" />
        <path d="M16 5v19" stroke="#ffe08a" strokeWidth="4.500" />
        <circle cx="24" cy="15" r="4" stroke="#fff" strokeWidth="1.500" fill="#17bcc4" />
        <path d="M26.500 18l3 4" stroke="#fff" strokeWidth="1.500" />
      </svg>
    ),
  },
  {
    name: "广联达",
    icon: (
      <span className="flex size-8 items-center justify-center rounded-md bg-[#ffa51c]">
        <CloudLogo color="#fff" size={26} />
      </span>
    ),
  },
];

const trayIcons: ReactNode[] = [
  <svg key="cloud" width="16" height="16" viewBox="0 0 16 16"><path d="M0 11q0-3 3-4 1-4 5-4 3 0 4 4 4 0 4 4 0 3-4 3H4q-4 0-4-3z" fill="#1787f0" /><path d="M9 9q3-3 6 0 2 4-3 5H7z" fill="#41d0ff" /></svg>,
  <GLogo key="g" size={16} />,
  <BrowserLogo key="e" size={16} />,
  <span key="gl" className="flex size-4 items-center justify-center rounded-sm bg-[#ffa51c]"><CloudLogo color="#fff" size={13} /></span>,
  <svg key="sync" width="16" height="16" viewBox="0 0 16 16"><rect width="16" height="16" rx="2" fill="#fff" /><path d="M2 8q0-5 6-6V0l5 4.500L8 8V6Q5 6 6 10z" fill="#1c7ce0" /><path d="M2 12h4v3H2zM7 12h3v3H7zM11 12h3v3h-3zM9 9h5v2H9z" fill="#f08a28" /></svg>,
  <svg key="usb" width="16" height="16" viewBox="0 0 16 16"><path d="M3 0h5v4h1v6l-2 2v4H5v-4l-3-2V4h1z" fill="#777" /><circle cx="11.500" cy="11.500" r="4.500" fill="#2aa32a" /><path d="M9 11.500l2 2 3-4" stroke="#fff" strokeWidth="1.500" fill="none" /></svg>,
  <svg key="safe" width="16" height="16" viewBox="0 0 16 16"><circle cx="8" cy="8" r="8" fill="#f7d817" /><path d="M2 3q8-5 12 5 0 5-5 8 4-10-7-13z" fill="#4aa82c" /><circle cx="8" cy="8" r="4.500" fill="#f7d817" /><path d="M8 4.500v7M4.500 8h7" stroke="#165d12" strokeWidth="2" /></svg>,
  <svg key="mute" width="16" height="16" viewBox="0 0 16 16"><path d="M0 5h4l5-4v14l-5-4H0z" fill="#d9532c" stroke="#f0b8a0" /><path d="M11 5q2 3 0 6M13 3q3 5 0 10" stroke="#8a3a28" fill="none" /></svg>,
  <svg key="net" width="16" height="16" viewBox="0 0 16 16" fill="#fff"><path d="M0 12h2v2H0zM3 10h2v4H3zM6 8h2v6H6zM9 5h2v9H9zM12 3h3v11h-3z" /></svg>,
  <svg key="vol" width="16" height="16" viewBox="0 0 16 16"><path d="M1 5h3l4-4v14l-4-4H1z" fill="#fff" /><path d="M10 5q2 3 0 6M12.500 3q3 5 0 10" stroke="#fff" fill="none" /></svg>,
];

function Grip() {
  return (
    <svg width="9" height="31" aria-hidden="true" className="shrink-0">
      {[0, 1, 2, 3, 4, 5, 6, 7].map((i) => (
        <path key={i} d={`M0 ${i * 4 + 0.5}h2m1 0h2m1 0h2`} stroke="#0c2c50" strokeWidth="2" opacity=".7" />
      ))}
    </svg>
  );
}

function Taskbar() {
  return (
    <div className="relative flex h-10 items-center overflow-hidden border-t border-[#1d3a58] bg-[linear-gradient(to_right,#1a5484,#2d7fb4_6%,#4a9fd2_16%,#5fb3e0_24%,#45a5d8_30%,#3f9bd6_40%,#2a82c8_50%,#2377bd_62%,#2d7cc2_68%,#1c64a8_72%,#174b82_76%,#1b4f8c_88%,#153f72)] shadow-[inset_0_1px_0_#9cc8e8]">
      <svg className="absolute top-0 left-2/3 h-10 w-40" viewBox="0 0 160 40" aria-hidden="true">
        <filter id="soft"><feGaussianBlur stdDeviation="3" /></filter>
        <path d="M16-6h18q40 22 60 50H76Q56 14 16-6z" fill="#b4d8fb" filter="url(#soft)" />
      </svg>
      <button aria-label="开始" className="ml-2">
        <svg width="36" height="36" viewBox="0 0 36 36" aria-hidden="true">
          <defs>
            <radialGradient id="orb" cx=".5" cy=".85" r=".9">
              <stop offset="0" stopColor="#35b8e8" />
              <stop offset=".5" stopColor="#1c5c90" />
              <stop offset="1" stopColor="#a8c4d8" />
            </radialGradient>
          </defs>
          <circle cx="18" cy="18" r="17.500" fill="url(#orb)" stroke="#173a5c" />
          <path d="M9 10q4-3 8-1l-2 8q-4-2-8 0z" fill="#f0592a" />
          <path d="M18.500 9.500q4 2 9-1l-2 8q-5 3-9 1z" fill="#8cc63e" />
          <path d="M6.500 19q4-2 8 0l-2 8q-4-2-8 0z" fill="#2f9be8" />
          <path d="M16 19.500q4 2 9-1l-2 8q-5 3-9 1z" fill="#ffc628" />
        </svg>
      </button>
      <div className="mr-2.5 ml-[13px]"><Grip /></div>
      <div className="flex gap-1">
        {taskApps.map((a) =>
          a.stacked ? (
            <div key={a.name} className="flex w-[58px]">
              <button aria-label={a.name} className="flex h-[38px] flex-1 items-center justify-center rounded-sm border border-white bg-white/60">
                {a.icon}
              </button>
              <i className="w-1 rounded-r-sm border-y border-r border-white/80 bg-white/30" />
            </div>
          ) : (
            <button key={a.name} aria-label={a.name} className="flex h-[38px] w-[58px] items-center justify-center rounded-sm border border-white/70 bg-white/20 bg-gradient-to-br from-white/40 to-transparent ring-1 ring-[#1d4a70]/60">
              {a.icon}
            </button>
          )
        )}
      </div>
      <div className="relative ml-auto flex h-full items-center text-white">
        <Grip />
        <div className="flex items-center pb-1.5">
          <span className="mr-1.5 ml-2 font-['Liberation_Serif',serif]">CH</span>
          <svg width="16" height="16" viewBox="0 0 16 16" fill="none" aria-hidden="true">
            <path d="M2 2L14 0q1 0 1 1l1 12q0 1-1 1L3 16q-1 0-1-1L0 4q0-2 2-2z" fill="#f04a1a" />
            <path d="M12 4H7Q4 4 4 6t4 2 4 2-3 2.500H4" stroke="#fff" strokeWidth="2.300" />
          </svg>
          <svg width="16" height="16" viewBox="0 0 16 16" fill="none" className="mx-1.5" aria-hidden="true">
            <circle cx="8" cy="8" r="7.500" fill="#1414a8" stroke="#c8d0e8" />
            <path d="M5.500 6q0-2.500 2.500-2.500T10.500 6Q10.500 7 8 8.500V10M8 11v2" stroke="#fff" strokeWidth="1.700" />
          </svg>
          <svg width="10" height="18" viewBox="0 0 10 18" fill="none" stroke="#fff" className="mr-2 ml-1" aria-hidden="true">
            <path d="M.5 4.500h5v4h-5zM3 4V1.500h6v4H6" />
            <path d="M2 14h6l-3 3z" fill="#fff" stroke="none" />
          </svg>
        </div>
        <div className="flex gap-2 pt-1">{trayIcons}</div>
        <div className="relative ml-5 pr-3 text-center leading-[17px]">
          <div>16:05 周四</div>
          <div>2024/3/28</div>
          <span className="absolute top-0 right-1 flex size-[9px] items-center justify-center rounded-full bg-[#f00] text-[8px] leading-none">1</span>
        </div>
        <button aria-label="通知" className="ml-1.5 flex h-3.5 w-4 items-center justify-center bg-white">
          <svg width="5" height="6" aria-hidden="true"><path d="M0 0l5 3-5 3z" fill="#123" /></svg>
        </button>
        <button aria-label="显示桌面" className="ml-3 h-full w-3.5 border border-[#8fb0d0]/60 bg-white/15" />
      </div>
    </div>
  );
}

export default function App() {
  return (
    <div lang="zh-CN" className="flex h-screen flex-col overflow-hidden bg-white font-['Noto_Sans','Noto_Sans_CJK_SC',sans-serif] text-xs text-[#222]">
      <Header />
      <div className="flex h-[73px] gap-[13px] border-b border-[#ccc] bg-gradient-to-b from-[#f3f3f3] to-[#dcdcdc] pt-[7px] pl-2.5">
        {ribbon.map((group, i) => (
          <div key={i} className="flex items-start">
            {group.map((tool) => (
              <RibbonButton key={tool.label} tool={tool} />
            ))}
          </div>
        ))}
      </div>
      <PageTabs />
      <main className="min-h-0 flex-1 overflow-hidden">
        <ListGrid />
      </main>
      <DetailPanel />
      <StatusBar />
      <Taskbar />
    </div>
  );
}
